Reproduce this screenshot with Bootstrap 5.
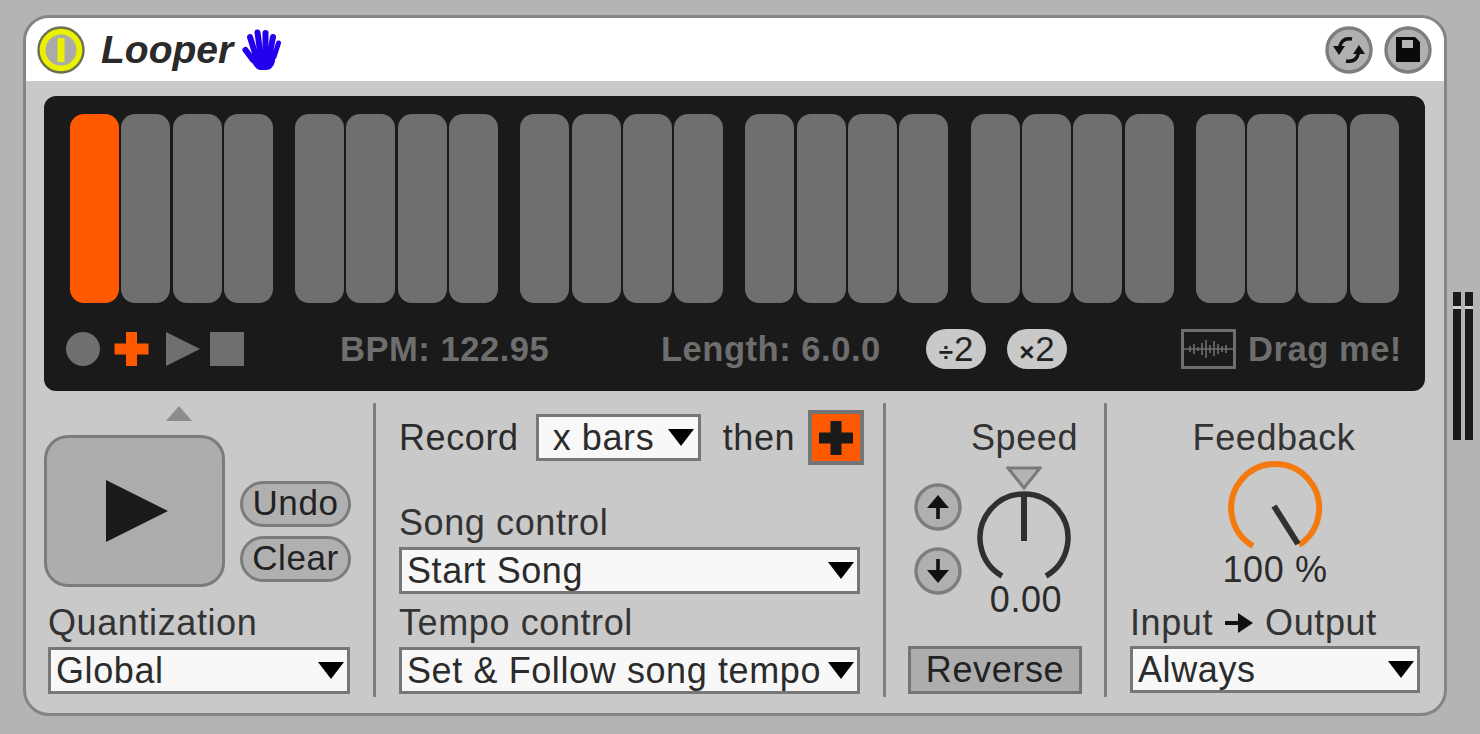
<!DOCTYPE html>
<html lang="en">
<head>
<meta charset="utf-8">
<title>Looper</title>
<link href="https://cdn.jsdelivr.net/npm/bootstrap@5.3.0/dist/css/bootstrap.min.css" rel="stylesheet">
<style>
html,body{height:100%;margin:0;overflow:hidden}
body{background:#b4b4b4;font-family:"Liberation Sans",Arial,sans-serif;color:#2b2b2b;font-size:36px;line-height:36px;letter-spacing:.6px}
.stage{height:734px;padding:15px 0 0 23px}
.device{width:1424px;height:701px;border:3px solid #858585;border-radius:26px;background:#c9c9c9;overflow:hidden;flex:none}
.titlebar{height:63px;background:#fff;padding:0 12px 0 11px}
.looper-name{font-size:39px;font-weight:700;font-style:italic;margin-left:16px;color:#2a2a2a;letter-spacing:0}
.hand{margin-left:9px;flex:none}
.round-btn{width:48px;height:48px;flex:none}
.top-btns{column-gap:11px}
.panel{height:295px;margin:15px 0 0 18px;width:1381px;background:#1a1a1a;border-radius:12px;padding:18px 20px 0 26px}
.bars{gap:22.1px}
.bar-group{gap:2.35px}
.step{width:49px;height:189px;background:#6f6f6f;border-radius:14px;flex:none}
.step-on{background:#ff5a00}
.transport{height:40px;margin-top:26px;color:#6e6e6e;font-weight:700;font-size:34.6px;letter-spacing:.5px}
.transport-icons{width:178px;margin-left:-4px;flex:none}
.bpm{margin-left:96px;width:321px;white-space:nowrap;flex:none}
.length{width:265px;white-space:nowrap;flex:none}
.pill{width:60px;height:40px;border-radius:20px;background:#c9c9c9;color:#222;font-weight:400;font-size:35px;line-height:40px;letter-spacing:0}
.pill-sym{font-size:26px;font-weight:700;margin-right:1px}
.zoom-pills{gap:21px;width:255px;flex:none}
.drag{white-space:nowrap;flex:none}
.wave{margin-right:12px;flex:none}
.lower{height:294px;margin:12px 0 0}
.sect{height:294px;flex:none}
.divider{width:3px;height:294px;background:#7f7f7f;flex:none}
.sect-a{width:347px;padding:3px 0 0 18px}
.sect-b{width:507px;padding:7px 0 0 23px}
.sect-c{width:218px;padding:16px 0 0 22px}
.sect-d{flex:1 1 auto;padding:16px 0 0 23px}
.nudge{width:30px;height:15px;margin-left:120px}
.main-play{width:181px;height:152px;border:3px solid #7c7c7c;border-radius:24px;background:#adadad;flex:none}
.play-glyph{margin-left:5px}
.main-row{margin-top:14px;margin-bottom:17px}
.side-btns{margin-left:15px;gap:9px;padding-top:40px}
.oval{width:111px;height:46px;border:3px solid #7c7c7c;border-radius:23px;background:#b0b0b0;color:#222;font-size:35px;line-height:38px;text-align:center}
.lab{line-height:38px;height:38px;white-space:nowrap;color:#333}
.picker{height:47px;border:3px solid #777;background:#f8f8f8;padding:0 3px 0 5px;color:#2b2b2b;line-height:40px;white-space:nowrap}
.tri{width:0;height:0;border-left:13px solid transparent;border-right:13px solid transparent;border-top:17px solid #000;flex:none}
.picker-q{width:302px;margin-left:4px;margin-top:5px}
.picker-x{width:165px;padding-left:14px;padding-right:4px}
.picker-w{width:461px}
.record-row{height:55px}
.record-word{margin-right:17px}
.then-word{margin-left:22px;margin-right:13px}
.square-add{width:56px;height:55px;border:4px solid #757575;background:#ff5a00;flex:none}
.gap-song{margin-top:39px}
.after-song{margin-top:10px}
.pick-gap{margin-top:5px}
.speed-lab{margin-left:-22px;width:277px;text-align:center}
.speed-tri{margin-left:98px;margin-top:9px;display:block}
.speed-row{margin-top:-2px;height:93px}
.arrows{gap:16px;width:55px;margin-left:6px;margin-top:-5px;flex:none}
.arrows svg{flex:none}
.speed-knob{margin-left:5px;flex:none}
.val{height:38px;line-height:38px;text-align:center}
.val-speed{margin-left:-22px;width:280px;margin-top:0}
.reverse{width:174px;height:48px;border:3px solid #757575;background:#adadad;text-align:center;line-height:42px;margin-top:27px;color:#222}
.fb-knob{margin:0 0 0 96px;display:block}
.fb-lab{width:288px;text-align:center}
.fb-val{margin-top:-6px;width:290px}
.io{margin-top:15px;margin-bottom:4px;gap:12px;line-height:38px;height:38px;color:#333}
.picker-d{width:290px}
.meter{margin:277px 0 0 6px;gap:4px;flex:none}
.meter-bar{width:8px;height:148px;background:linear-gradient(#1a1a1a 14px,#d0d0d0 14px,#d0d0d0 17px,#1a1a1a 17px)}
</style>
</head>
<body>
<div class="stage d-flex">
  <div class="device">
    <div class="titlebar d-flex align-items-center">
      <svg class="round-btn" viewBox="0 0 48 48" role="img" aria-label="Power"><circle cx="24" cy="24" r="22.5" fill="#e9f000" stroke="#6e6e50" stroke-width="2.4"/><circle cx="24" cy="24" r="15.5" fill="#aaa"/><rect x="20.5" y="12" width="7" height="24" fill="#e9f000"/></svg>
      <span class="looper-name">Looper</span>
      <svg class="hand" width="40" height="42" viewBox="0 0 40 42" role="img" aria-label="Hand"><g stroke="#2200ee" stroke-linecap="round" fill="none"><path d="M8 8 L13 24" stroke-width="6"/><path d="M15.5 3.5 L18 22" stroke-width="6"/><path d="M23.5 4 L23.5 22" stroke-width="6"/><path d="M31 8 L28 24" stroke-width="6"/><path d="M3.5 21 L11 31" stroke-width="6"/><path d="M36.5 14 L32 28" stroke-width="5"/></g><path d="M10 21 L33 21 L33 32 Q31 41 24 41 L18 41 Q13 40 10 33Z" fill="#2200ee"/></svg>
      <div class="ms-auto d-flex top-btns align-items-center">
        <svg class="round-btn" viewBox="0 0 48 48" role="img" aria-label="Hot swap"><circle cx="24" cy="24" r="22" fill="#b0b0b0" stroke="#7d7d7d" stroke-width="3.4"/><g fill="none" stroke="#111" stroke-width="3.4"><path d="M27 13 Q17 11 14.500 21"/><path d="M21 35 Q31 37 33.500 27"/></g><path d="M8 20 L20 20 L14 29Z" fill="#111"/><path d="M28 28 L40 28 L34 19Z" fill="#111"/></svg>
        <svg class="round-btn" viewBox="0 0 48 48" role="img" aria-label="Save"><circle cx="24" cy="24" r="22" fill="#b0b0b0" stroke="#7d7d7d" stroke-width="3.4"/><path d="M12 11 L31 11 L36 16 L36 36 L12 36Z" fill="#0a0a0a"/><rect x="18" y="14" width="11" height="8" fill="#b5b5b5"/></svg>
      </div>
    </div>
    <div class="panel">
      <div class="bars d-flex">
        <div class="bar-group d-flex"><div class="step step-on"></div><div class="step"></div><div class="step"></div><div class="step"></div></div>
        <div class="bar-group d-flex"><div class="step"></div><div class="step"></div><div class="step"></div><div class="step"></div></div>
        <div class="bar-group d-flex"><div class="step"></div><div class="step"></div><div class="step"></div><div class="step"></div></div>
        <div class="bar-group d-flex"><div class="step"></div><div class="step"></div><div class="step"></div><div class="step"></div></div>
        <div class="bar-group d-flex"><div class="step"></div><div class="step"></div><div class="step"></div><div class="step"></div></div>
        <div class="bar-group d-flex"><div class="step"></div><div class="step"></div><div class="step"></div><div class="step"></div></div>
      </div>
      <div class="transport d-flex align-items-center">
        <svg class="transport-icons" height="36" viewBox="0 0 178 36" role="img" aria-label="Transport"><circle cx="17" cy="18" r="17" fill="#6f6f6f"/><path d="M60 1h11v11.500h11.500v11H71V35H60V23.500H48.500v-11H60z" fill="#ff5a00"/><path d="M100 1 L134 18 L100 35Z" fill="#6f6f6f"/><rect x="144" y="1" width="34" height="34" fill="#6f6f6f"/></svg>
        <span class="bpm">BPM: 122.95</span>
        <span class="length">Length: 6.0.0</span>
        <div class="zoom-pills d-flex">
          <div class="pill text-center"><span class="pill-sym">÷</span>2</div>
          <div class="pill text-center"><span class="pill-sym">×</span>2</div>
        </div>
        <svg class="wave" width="55" height="40" viewBox="0 0 55 40" role="img" aria-label="Waveform"><rect x="1.500" y="1.500" width="52" height="37" fill="none" stroke="#6e6e6e" stroke-width="3"/><path d="M3 20h6M9 17v6M13 15v10M17 18v4M21 14v12M25 11v18M29 16v8M33 12v15M37 15v10M41 17v6M45 16v8M48 20h4M9 20h40" stroke="#6e6e6e" stroke-width="1.600" fill="none"/></svg>
        <span class="drag">Drag me!</span>
      </div>
    </div>
    <div class="lower d-flex">
      <div class="sect sect-a">
        <svg class="nudge d-block" viewBox="0 0 30 15" role="img" aria-label="Up"><path d="M15 0 L28 15 L2 15Z" fill="#8c8c8c"/></svg>
        <div class="d-flex align-items-center main-row">
          <div class="main-play d-flex align-items-center justify-content-center">
            <svg class="play-glyph" width="62" height="62" viewBox="0 0 62 62" role="img" aria-label="Play"><path d="M0 0 L62 31 L0 62Z" fill="#1a1a1a"/></svg>
          </div>
          <div class="side-btns d-flex flex-column">
            <div class="oval">Undo</div>
            <div class="oval">Clear</div>
          </div>
        </div>
        <div class="lab ms-1">Quantization</div>
        <div class="picker picker-q d-flex align-items-center justify-content-between">Global<span class="tri"></span></div>
      </div>
      <div class="divider"></div>
      <div class="sect sect-b">
        <div class="record-row d-flex align-items-center">
          <span class="record-word">Record</span>
          <div class="picker picker-x d-flex align-items-center justify-content-between">x bars<span class="tri"></span></div>
          <span class="then-word">then</span>
          <div class="square-add d-flex align-items-center justify-content-center">
            <svg width="34" height="34" viewBox="0 0 34 34" role="img" aria-label="Add"><path d="M11.500 0h11v11.500H34v11H22.500V34h-11V22.500H0v-11h11.500z" fill="#1a1a1a"/></svg>
          </div>
        </div>
        <div class="lab gap-song">Song control</div>
        <div class="picker picker-w d-flex align-items-center justify-content-between pick-gap">Start Song<span class="tri"></span></div>
        <div class="lab after-song">Tempo control</div>
        <div class="picker picker-w d-flex align-items-center justify-content-between pick-gap">Set &amp; Follow song tempo<span class="tri"></span></div>
      </div>
      <div class="divider"></div>
      <div class="sect sect-c">
        <div class="lab speed-lab">Speed</div>
        <svg class="speed-tri" width="36" height="24" viewBox="0 0 36 24" role="img" aria-label="Marker"><path d="M2 2 L34 2 L18 22Z" fill="#b4b4b4" stroke="#7a7a7a" stroke-width="3"/></svg>
        <div class="speed-row d-flex">
          <div class="arrows d-flex flex-column">
            <svg width="48" height="48" viewBox="0 0 48 48" role="img" aria-label="Up"><circle cx="24" cy="24" r="22" fill="#b0b0b0" stroke="#7d7d7d" stroke-width="3.4"/><path d="M24 12 L35 25 L13 25Z" fill="#111"/><rect x="22.200" y="22" width="3.600" height="14" fill="#111"/></svg>
            <svg width="48" height="48" viewBox="0 0 48 48" role="img" aria-label="Down"><circle cx="24" cy="24" r="22" fill="#b0b0b0" stroke="#7d7d7d" stroke-width="3.4"/><path d="M24 36 L35 23 L13 23Z" fill="#111"/><rect x="22.200" y="12" width="3.600" height="14" fill="#111"/></svg>
          </div>
          <svg class="speed-knob" width="100" height="100" viewBox="0 0 100 100" role="img" aria-label="Speed knob"><path d="M28 88 A44 44 0 1 1 72 88" fill="none" stroke="#303030" stroke-width="5.500"/><path d="M50 6 V53" stroke="#303030" stroke-width="6"/></svg>
        </div>
        <div class="val val-speed">0.00</div>
        <div class="reverse">Reverse</div>
      </div>
      <div class="divider"></div>
      <div class="sect sect-d">
        <div class="lab fb-lab">Feedback</div>
        <svg class="fb-knob" width="100" height="100" viewBox="0 0 100 100" role="img" aria-label="Feedback knob"><path d="M27 89 A44 44 0 1 1 73 88" fill="none" stroke="#f47a10" stroke-width="6"/><path d="M48 49 L72 87" stroke="#303030" stroke-width="6"/></svg>
        <div class="val fb-val">100 %</div>
        <div class="io d-flex align-items-center"><span>Input</span><svg width="28" height="24" viewBox="0 0 28 24" role="img" aria-label="to"><path d="M0 12 H16" stroke="#111" stroke-width="4"/><path d="M13 2 L28 12 L13 22Z" fill="#111"/></svg><span>Output</span></div>
        <div class="picker picker-d d-flex align-items-center justify-content-between">Always<span class="tri"></span></div>
      </div>
    </div>
  </div>
  <div class="meter d-flex">
    <div class="meter-bar"></div>
    <div class="meter-bar"></div>
  </div>
</div>
<script src="https://cdn.jsdelivr.net/npm/bootstrap@5.3.0/dist/js/bootstrap.bundle.min.js"></script>
</body>
</html>
